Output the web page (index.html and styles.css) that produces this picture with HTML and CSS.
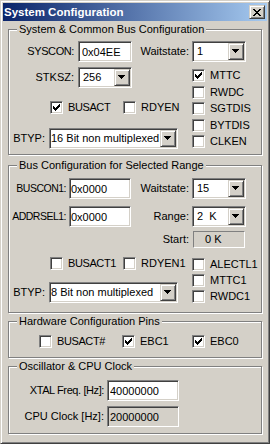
FILE: index.html
```html
<!DOCTYPE html>
<html>
<head>
<meta charset="utf-8">
<link rel="stylesheet" href="styles.css">
</head>
<body>
<div class="window">
  <div class="titlebar">
    <span class="title">System Configuration</span>
    <span class="close"><svg width="8" height="7" viewBox="0 0 8 7" shape-rendering="crispEdges"><path d="M0 0h2v1h-2z M6 0h2v1h-2z M1 1h2v1h-2z M5 1h2v1h-2z M2 2h4v1h-4z M3 3h2v1h-2z M2 4h4v1h-4z M1 5h2v1h-2z M5 5h2v1h-2z M0 6h2v1h-2z M6 6h2v1h-2z" fill="#000"/></svg></span>
  </div>
  <div class="client">
    <!-- Group 1 -->
    <div class="group g1">
      <div class="legend">System &amp; Common Bus Configuration</div>
      <div class="row mt5">
        <span class="lbl w65 tight">SYSCON:</span>
        <input class="edit ml4 w54 pad2" value="0x04EE">
        <span class="lbl w57">Waitstate:</span>
        <div class="combo ml3 w54"><span class="val pad2">1</span><span class="btn"><svg width="8" height="5" viewBox="0 0 8 5" shape-rendering="crispEdges"><path d="M0 0h7v1h-7z M1 1h5v1h-5z M2 2h3v1h-3z M3 3h1v1h-1z" fill="#000"/></svg></span></div>
      </div>
      <div class="split mt5">
        <div class="left">
          <div class="row">
            <span class="lbl w65">STKSZ:</span>
            <div class="combo ml4 w54"><span class="val pad2">256</span><span class="btn"><svg width="8" height="5" viewBox="0 0 8 5" shape-rendering="crispEdges"><path d="M0 0h7v1h-7z M1 1h5v1h-5z M2 2h3v1h-3z M3 3h1v1h-1z" fill="#000"/></svg></span></div>
          </div>
          <div class="chkrow mt13 pl41">
            <span class="ck w73"><span class="box"><svg class="tick" width="11" height="11" viewBox="1 1 11 11" shape-rendering="crispEdges"><path d="M9 3h1v1h-1z M8 4h2v1h-2z M3 5h1v1h-1z M7 5h3v1h-3z M3 6h2v1h-2z M6 6h3v1h-3z M3 7h5v1h-5z M4 8h3v1h-3z M5 9h1v1h-1z" fill="#000"/></svg></span><span class="t tight">BUSACT</span></span>
            <span class="ck"><span class="box"></span><span class="t">RDYEN</span></span>
          </div>
          <div class="row mt14">
            <span class="lbl w36">BTYP:</span>
            <div class="combo ml4 w129"><span class="val">16 Bit non multiplexed</span><span class="btn"><svg width="8" height="5" viewBox="0 0 8 5" shape-rendering="crispEdges"><path d="M0 0h7v1h-7z M1 1h5v1h-5z M2 2h3v1h-3z M3 3h1v1h-1z" fill="#000"/></svg></span></div>
          </div>
        </div>
        <div class="right">
          <span class="ck mt2"><span class="box"><svg class="tick" width="11" height="11" viewBox="1 1 11 11" shape-rendering="crispEdges"><path d="M9 3h1v1h-1z M8 4h2v1h-2z M3 5h1v1h-1z M7 5h3v1h-3z M3 6h2v1h-2z M6 6h3v1h-3z M3 7h5v1h-5z M4 8h3v1h-3z M5 9h1v1h-1z" fill="#000"/></svg></span><span class="t">MTTC</span></span>
          <span class="ck mt4"><span class="box"></span><span class="t">RWDC</span></span>
          <span class="ck mt3"><span class="box"></span><span class="t">SGTDIS</span></span>
          <span class="ck mt4"><span class="box"></span><span class="t">BYTDIS</span></span>
          <span class="ck mt3"><span class="box"></span><span class="t">CLKEN</span></span>
        </div>
      </div>
    </div>

    <!-- Group 2 -->
    <div class="group g2">
      <div class="legend">Bus Configuration for Selected Range</div>
      <div class="row mt6">
        <span class="lbl w57 squeeze">BUSCON1:</span>
        <input class="edit ml3 w62 pad0" value="0x0000">
        <span class="lbl w58">Waitstate:</span>
        <div class="combo ml3 w54"><span class="val pad2">15</span><span class="btn"><svg width="8" height="5" viewBox="0 0 8 5" shape-rendering="crispEdges"><path d="M0 0h7v1h-7z M1 1h5v1h-5z M2 2h3v1h-3z M3 3h1v1h-1z" fill="#000"/></svg></span></div>
      </div>
      <div class="row mt7">
        <span class="lbl w57 squeeze">ADDRSEL1:</span>
        <input class="edit ml3 w62 pad0" value="0x0000">
        <span class="lbl w58">Range:</span>
        <div class="combo ml3 w54"><span class="val pad2">2&nbsp;&nbsp;K</span><span class="btn"><svg width="8" height="5" viewBox="0 0 8 5" shape-rendering="crispEdges"><path d="M0 0h7v1h-7z M1 1h5v1h-5z M2 2h3v1h-3z M3 3h1v1h-1z" fill="#000"/></svg></span></div>
      </div>
      <div class="row h17 mt4">
        <span class="sp122"></span>
        <span class="lbl w58">Start:</span>
        <span class="static ml4">0 K</span>
      </div>
      <div class="split mt9">
        <div class="left">
          <div class="chkrow pl41">
            <span class="ck w73"><span class="box"></span><span class="t tight">BUSACT1</span></span>
            <span class="ck"><span class="box"></span><span class="t">RDYEN1</span></span>
          </div>
          <div class="row mt12">
            <span class="lbl w36">BTYP:</span>
            <div class="combo ml4 w129"><span class="val">8 Bit non multiplexed</span><span class="btn"><svg width="8" height="5" viewBox="0 0 8 5" shape-rendering="crispEdges"><path d="M0 0h7v1h-7z M1 1h5v1h-5z M2 2h3v1h-3z M3 3h1v1h-1z" fill="#000"/></svg></span></div>
          </div>
        </div>
        <div class="right">
          <span class="ck mt1"><span class="box"></span><span class="t">ALECTL1</span></span>
          <span class="ck mt3"><span class="box"></span><span class="t">MTTC1</span></span>
          <span class="ck mt3"><span class="box"></span><span class="t">RWDC1</span></span>
        </div>
      </div>
    </div>

    <!-- Group 3 -->
    <div class="group g3">
      <div class="legend">Hardware Configuration Pins</div>
      <div class="chkrow mt7 pl30">
        <span class="ck w83"><span class="box"></span><span class="t tight">BUSACT#</span></span>
        <span class="ck w70"><span class="box"><svg class="tick" width="11" height="11" viewBox="1 1 11 11" shape-rendering="crispEdges"><path d="M9 3h1v1h-1z M8 4h2v1h-2z M3 5h1v1h-1z M7 5h3v1h-3z M3 6h2v1h-2z M6 6h3v1h-3z M3 7h5v1h-5z M4 8h3v1h-3z M5 9h1v1h-1z" fill="#000"/></svg></span><span class="t">EBC1</span></span>
        <span class="ck"><span class="box"><svg class="tick" width="11" height="11" viewBox="1 1 11 11" shape-rendering="crispEdges"><path d="M9 3h1v1h-1z M8 4h2v1h-2z M3 5h1v1h-1z M7 5h3v1h-3z M3 6h2v1h-2z M6 6h3v1h-3z M3 7h5v1h-5z M4 8h3v1h-3z M5 9h1v1h-1z" fill="#000"/></svg></span><span class="t">EBC0</span></span>
      </div>
    </div>

    <!-- Group 4 -->
    <div class="group g4">
      <div class="legend">Oscillator &amp; CPU Clock</div>
      <div class="row mt7">
        <span class="lbl w95 tight">XTAL Freq. [Hz]:</span>
        <input class="edit ml3 w72 pad1" value="40000000">
      </div>
      <div class="row mt5">
        <span class="lbl w95">CPU Clock [Hz]:</span>
        <input class="edit ml3 w72 pad1 ro" value="20000000" readonly>
      </div>
    </div>
  </div>
</div>
</body>
</html>
```

FILE: styles.css
```css
* { box-sizing: border-box; }
html, body { margin: 0; padding: 0; }
body {
  width: 270px;
  height: 444px;
  background: #D4D0C8;
  font-family: "Liberation Sans", Arial, sans-serif;
  font-size: 11px;
  line-height: 13px;
  color: #000;
  overflow: hidden;
}

.window {
  width: 270px;
  height: 444px;
  border: 1px solid;
  border-color: #D4D0C8 #404040 #404040 #D4D0C8;
  box-shadow: inset 1px 1px 0 #fff, inset -1px -1px 0 #808080;
  padding: 2px;
  background: #D4D0C8;
  display: flex;
  flex-direction: column;
}

.titlebar {
  height: 18px;
  flex: none;
  display: flex;
  align-items: center;
  padding: 0 2px 0 1px;
  background: linear-gradient(to right, #0A246A, #A6CAF0);
}
.title {
  color: #fff;
  font-weight: bold;
  font-size: 11.5px;
  white-space: nowrap;
}
.close {
  margin-left: auto;
  width: 16px;
  height: 14px;
  display: flex;
  align-items: center;
  justify-content: center;
  background: #D4D0C8;
  border: 1px solid;
  border-color: #D4D0C8 #404040 #404040 #D4D0C8;
  box-shadow: inset 1px 1px 0 #fff, inset -1px -1px 0 #808080;
}
.close svg { display: block; }

.client {
  flex: 1;
  padding: 0 5px;
}

.group {
  border: 1px solid #808080;
  box-shadow: inset 1px 1px 0 #fff, 1px 1px 0 #fff;
}
.g1 { margin-top: 8px; padding-bottom: 5px; }
.g2 { margin-top: 10px; padding-bottom: 9px; }
.g3 { margin-top: 8px; padding-bottom: 9px; }
.g4 { margin-top: 8px; padding-bottom: 6px; }

.legend {
  display: table;
  margin: -7px 0 0 8px;
  padding: 0 2px;
  background: #D4D0C8;
  line-height: 13px;
  white-space: nowrap;
}

.row {
  display: flex;
  align-items: center;
  height: 21px;
}
.row.h17 { height: 17px; }
.chkrow {
  display: flex;
  align-items: center;
  height: 13px;
}
.split { display: flex; align-items: flex-start; }
.left { width: 183px; flex: none; }
.right { display: flex; flex-direction: column; }

.lbl {
  flex: none;
  display: flex;
  justify-content: flex-end;
  white-space: nowrap;
}
.tight { letter-spacing: -0.4px; }
.squeeze { font-size: 10.5px; letter-spacing: -0.5px; }
.sp122 { width: 122px; flex: none; }

.edit {
  flex: none;
  height: 21px;
  font: inherit;
  color: #000;
  background: #fff;
  border: 1px solid;
  border-color: #808080 #fff #fff #808080;
  box-shadow: inset 1px 1px 0 #404040, inset -1px -1px 0 #D4D0C8;
  outline: none;
  padding: 0 1px 0 1px;
  border-radius: 0;
}
.edit.pad0 { padding-left: 1px; }
.edit.pad1 { padding-left: 2px; }
.edit.pad2 { padding-left: 3px; }
.edit.ro { background: #D4D0C8; }

.combo {
  flex: none;
  height: 21px;
  display: flex;
  padding: 1px;
  background: #fff;
  border: 1px solid;
  border-color: #808080 #fff #fff #808080;
  box-shadow: inset 1px 1px 0 #404040, inset -1px -1px 0 #D4D0C8;
}
.combo .val {
  flex: 1;
  min-width: 0;
  overflow: hidden;
  white-space: nowrap;
  align-self: center;
  padding-left: 0;
}
.combo .val.pad2 { padding-left: 3px; }
.combo .btn {
  flex: none;
  width: 16px;
  height: 17px;
  display: flex;
  align-items: center;
  justify-content: center;
  background: #D4D0C8;
  border: 1px solid;
  border-color: #D4D0C8 #404040 #404040 #D4D0C8;
  box-shadow: inset 1px 1px 0 #fff, inset -1px -1px 0 #808080;
}
.combo .btn svg { display: block; }

.static {
  flex: none;
  width: 52px;
  height: 17px;
  display: flex;
  align-items: center;
  padding-left: 11px;
  border: 1px solid;
  border-color: #808080 #fff #fff #808080;
}

.ck {
  display: flex;
  align-items: center;
  height: 13px;
  flex: none;
  white-space: nowrap;
}
.ck .box {
  width: 13px;
  height: 13px;
  flex: none;
  background: #fff;
  border: 1px solid;
  border-color: #808080 #fff #fff #808080;
  box-shadow: inset 1px 1px 0 #404040, inset -1px -1px 0 #D4D0C8;
}
.ck .box .tick { display: block; }
.ck .t { margin-left: 5px; }

/* sizing & spacing utilities (kept last so they win) */
.w36 { width: 36px; }
.w54 { width: 54px; }
.w57 { width: 57px; }
.w58 { width: 58px; }
.w62 { width: 62px; }
.w65 { width: 65px; }
.w70 { width: 70px; }
.w72 { width: 72px; }
.w73 { width: 73px; }
.w83 { width: 83px; }
.w95 { width: 95px; }
.w129 { width: 129px; }

.ml3 { margin-left: 3px; }
.ml4 { margin-left: 4px; }
.mt1 { margin-top: 1px; }
.mt2 { margin-top: 2px; }
.mt3 { margin-top: 3px; }
.mt4 { margin-top: 4px; }
.mt5 { margin-top: 5px; }
.mt6 { margin-top: 6px; }
.mt7 { margin-top: 7px; }
.mt9 { margin-top: 9px; }
.mt12 { margin-top: 12px; }
.mt13 { margin-top: 13px; }
.mt14 { margin-top: 14px; }
.pl30 { padding-left: 30px; }
.pl41 { padding-left: 41px; }
```
